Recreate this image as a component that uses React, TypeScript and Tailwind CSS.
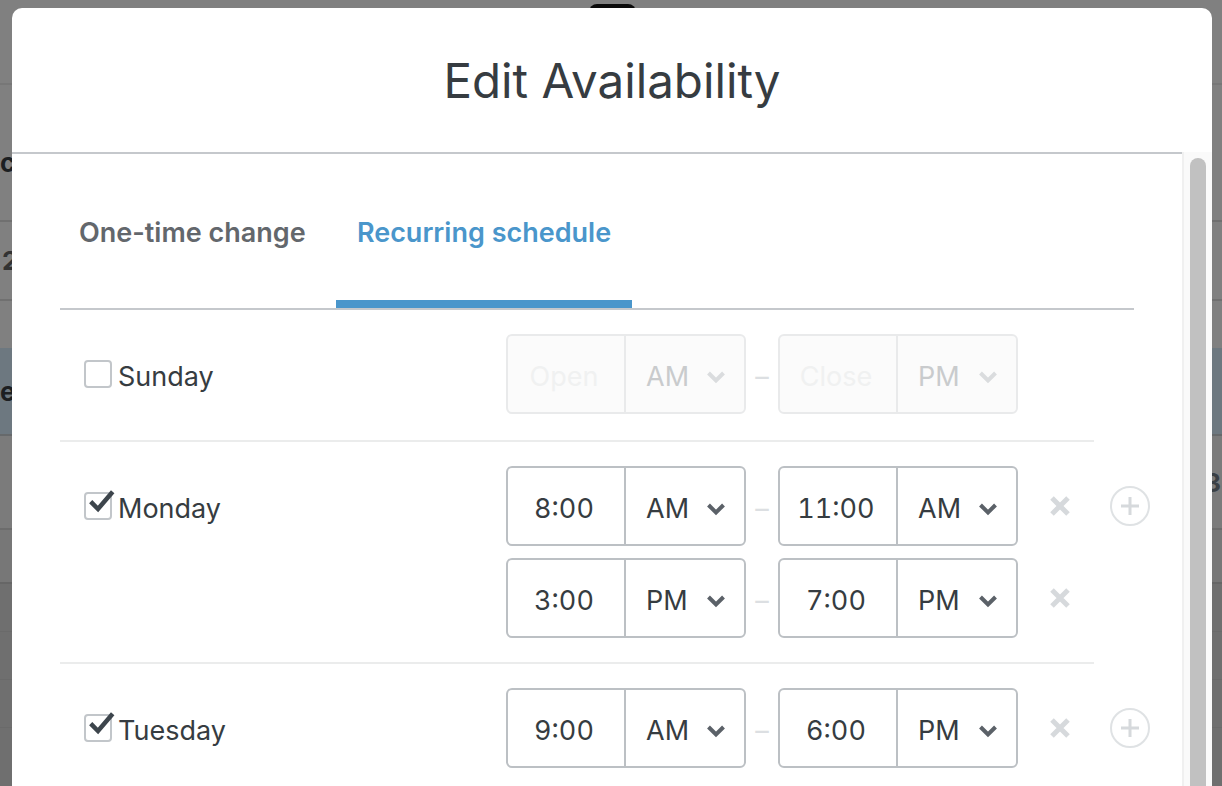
const font = "font-['Inter','Liberation_Sans',sans-serif]"

function Chevron({ disabled }: { disabled?: boolean }) {
  return (
    <svg width="20" height="14" viewBox="0 0 20 14" fill="none" className="mt-[5px]">
      <path
        d="M2.5 3l7.5 7.5L17.5 3"
        stroke={disabled ? "#dadcde" : "#5b6168"}
        strokeWidth="4"
      />
    </svg>
  )
}

function TimeField({ time, period, disabled }: { time: string; period: string; disabled?: boolean }) {
  return (
    <div
      className={`flex h-[80px] w-[240px] rounded-[6px] border-2 ${
        disabled ? "border-[#e9eaeb] bg-[#fbfbfb]" : "border-[#bcc0c4] bg-white"
      }`}
    >
      <div
        className={`flex w-[118px] items-center justify-center border-r-2 pr-[4px] pt-[7px] tabular-nums ${
          disabled ? "border-[#e9eaeb] text-[#f0f1f1]" : "border-[#bcc0c4] text-[#363c41]"
        }`}
      >
        {time}
      </div>
      <div className={`flex flex-1 items-center pl-[20px] ${disabled ? "text-[#c9cbcd]" : "text-[#363c41]"}`}>
        <span className="w-[60px] pt-[7px]">{period}</span>
        <Chevron disabled={disabled} />
      </div>
    </div>
  )
}

function Slot({ from, to, add, disabled }: {
  from: [string, string]
  to: [string, string]
  add?: boolean
  disabled?: boolean
}) {
  return (
    <div className="flex items-center">
      <TimeField time={from[0]} period={from[1]} disabled={disabled} />
      <div className="flex w-[32px] justify-center pt-[7px] text-[#dcdfe2]">–</div>
      <TimeField time={to[0]} period={to[1]} disabled={disabled} />
      {!disabled && (
        <>
          <svg width="20" height="20" viewBox="0 0 20 20" className="ml-[32px]">
            <path d="M2 2l16 16M18 2L2 18" stroke="#d6d9dc" strokeWidth="5" />
          </svg>
          {add && (
            <svg width="40" height="40" viewBox="0 0 40 40" fill="none" className="ml-[40px]">
              <circle cx="20" cy="20" r="19" stroke="#dfe2e4" strokeWidth="2" />
              <path d="M11 20h18M20 11v18" stroke="#d6d9dc" strokeWidth="3" />
            </svg>
          )}
        </>
      )}
    </div>
  )
}

function DayRow({ day, checked, slots, last, first }: {
  day: string
  checked?: boolean
  slots: React.ReactNode
  last?: boolean
  first?: boolean
}) {
  return (
    <div
      className={`flex w-[1034px] pl-[24px] pt-[24px] ${first ? "pb-[26px]" : "pb-[24px]"} ${
        last ? "" : "border-b-2 border-[#ebecec]"
      }`}
    >
      <div className="flex h-[80px] w-[422px] shrink-0 items-center">
        <div className="relative h-[28px] w-[28px] rounded-[4px] border-2 border-[#c2c6ca]">
          {checked && (
            <svg width="32" height="24" viewBox="0 0 32 24" fill="none" className="absolute left-[-2px] top-[-4px]">
              <path d="M6.7 11.7l7.3 7.3L28.7 1.7" stroke="#3d454c" strokeWidth="4.5" />
            </svg>
          )}
        </div>
        <span className="ml-[6px] pt-[6px] text-[#363c41]">{day}</span>
      </div>
      <div className="flex flex-col gap-[12px]">{slots}</div>
    </div>
  )
}

export default function App() {
  return (
    <div className={`relative h-[786px] w-[1222px] overflow-hidden bg-[#808080] text-[27px] ${font}`}>
      {/* dimmed page behind the modal */}
      <div className="flex h-full flex-col font-bold text-[#1c1f22]">
        <div className="h-[85px] border-b-2 border-[#777777]" />
        <div className="flex h-[137px] items-center border-b-2 border-[#707070] pt-[20px] text-[26px]">c</div>
        <div className="flex h-[79px] items-center border-b-2 border-[#707070] pl-[2px] text-[26px] text-[#333]">
          2
        </div>
        <div className="h-[47px]" />
        <div className="flex h-[88px] items-center border-b-2 border-[#66696b] bg-[#6d7880] text-[26px]">e</div>
        <div className="flex h-[94px] items-center justify-end border-b-2 border-[#6c6c6c] bg-[#7b7b7b] pr-[1px] text-[26px] text-[#3a3f44]">
          3
        </div>
        <div className="h-[54px] border-b-2 border-[#666666] bg-[#777777]" />
        <div className="h-[48px] border-b border-[#6a6a6a] bg-[#6f6f6f]" />
        <div className="h-[48px] border-b border-[#6a6a6a] bg-[#6f6f6f]" />
        <div className="h-[48px] border-b border-[#6a6a6a] bg-[#6f6f6f]" />
        <div className="flex-1 bg-[#6f6f6f]" />
      </div>

      {/* notch */}
      <div className="absolute left-[589px] top-[4px] h-[8px] w-[47px] rounded-t-[8px] bg-[#0a0a0a]" />

      {/* modal */}
      <div className="absolute left-[12px] top-[8px] flex h-[800px] w-[1200px] flex-col rounded-t-[10px] bg-white">
        <div className="flex h-[144px] shrink-0 items-center justify-center pt-[2px] text-[47.5px] text-[#363c41]">
          Edit Availability
        </div>
        <div className="flex min-h-0 flex-1">
          <div className="w-[1170px] border-t-2 border-[#c5c8cc] pl-[48px] pr-[48px]">
            <div className="flex h-[156px] border-b-2 border-[#c5c8cc] font-semibold">
              <div className="flex h-[154px] w-[276px] items-center pl-[19px] pt-[4px] text-[#63676c]">
                One-time change
              </div>
              <div className="flex h-[154px] w-[296px] items-center justify-center border-b-8 border-[#4a96cb] pt-[12px] text-[#4a96cb]">
                Recurring schedule
              </div>
            </div>
            <DayRow
              first
              day="Sunday"
              slots={<Slot from={["Open", "AM"]} to={["Close", "PM"]} disabled />}
            />
            <DayRow
              day="Monday"
              checked
              slots={
                <>
                  <Slot from={["8:00", "AM"]} to={["11:00", "AM"]} add />
                  <Slot from={["3:00", "PM"]} to={["7:00", "PM"]} />
                </>
              }
            />
            <DayRow
              day="Tuesday"
              checked
              last
              slots={<Slot from={["9:00", "AM"]} to={["6:00", "PM"]} add />}
            />
          </div>
          <div className="flex-1 border-l-2 border-[#f0f0f0] bg-[#fafafa] pl-[6px] pt-[6px]">
            <div className="h-full w-[16px] rounded-t-[8px] bg-[#c1c1c1]" />
          </div>
        </div>
      </div>
    </div>
  )
}
